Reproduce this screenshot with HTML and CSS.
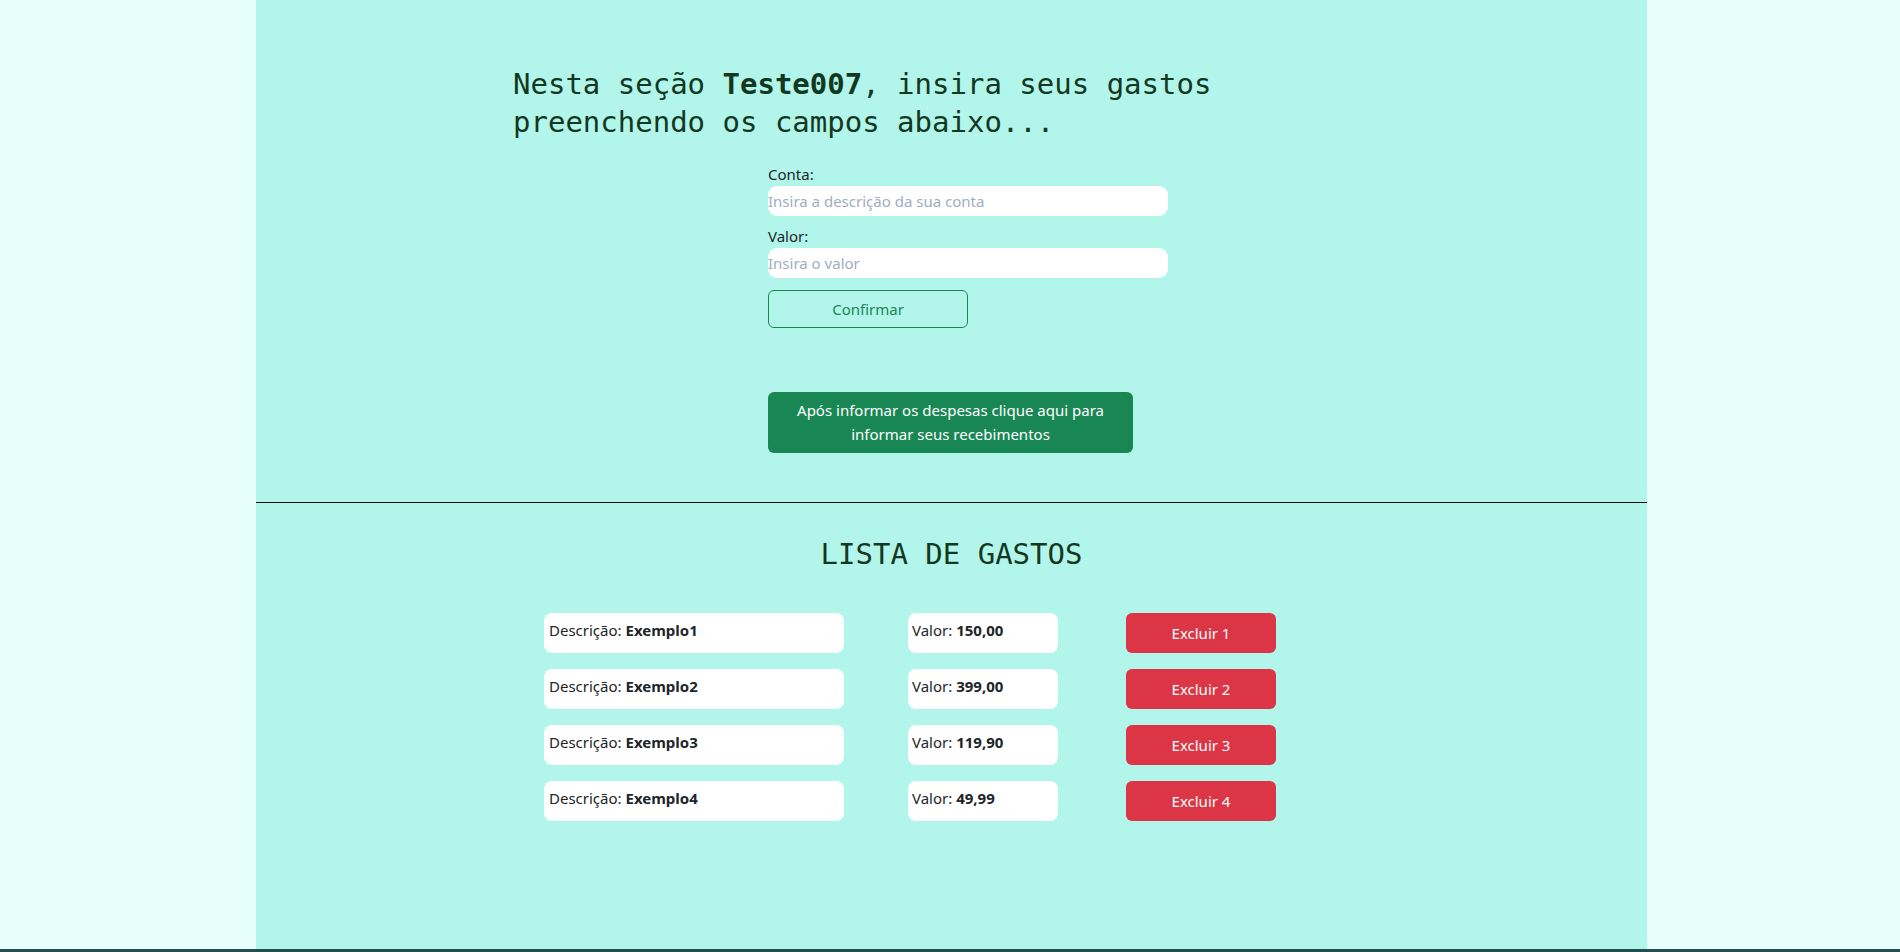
FILE: index.html
```html
<!DOCTYPE html>
<html lang="pt-BR">
<head>
<meta charset="utf-8">
<title>Gastos</title>
<link rel="stylesheet" href="styles.css">
</head>
<body>
<main class="page">
  <section class="entry">
    <h1 class="intro">Nesta seção <strong>Teste007</strong>, insira seus gastos preenchendo os campos abaixo...</h1>
    <form class="form">
      <label class="label" for="conta">Conta:</label>
      <input class="field" id="conta" type="text" placeholder="Insira a descrição da sua conta">
      <label class="label label-next" for="valor">Valor:</label>
      <input class="field" id="valor" type="text" placeholder="Insira o valor">
      <button class="btn-confirm" type="button">Confirmar</button>
    </form>
    <button class="btn-next" type="button">Após informar os despesas clique aqui para informar seus recebimentos</button>
  </section>
  <hr class="divider">
  <section class="list">
    <h2 class="list-title">LISTA DE GASTOS</h2>
    <div class="rows">
      <div class="row">
        <div class="cell cell-desc">Descrição: <b>Exemplo1</b></div>
        <div class="cell cell-val">Valor: <b>150,00</b></div>
        <button class="btn-del" type="button">Excluir 1</button>
      </div>
      <div class="row">
        <div class="cell cell-desc">Descrição: <b>Exemplo2</b></div>
        <div class="cell cell-val">Valor: <b>399,00</b></div>
        <button class="btn-del" type="button">Excluir 2</button>
      </div>
      <div class="row">
        <div class="cell cell-desc">Descrição: <b>Exemplo3</b></div>
        <div class="cell cell-val">Valor: <b>119,90</b></div>
        <button class="btn-del" type="button">Excluir 3</button>
      </div>
      <div class="row">
        <div class="cell cell-desc">Descrição: <b>Exemplo4</b></div>
        <div class="cell cell-val">Valor: <b>49,99</b></div>
        <button class="btn-del" type="button">Excluir 4</button>
      </div>
    </div>
  </section>
</main>
<footer class="footer"></footer>
</body>
</html>
```

FILE: styles.css
```css
* { box-sizing: border-box; }
html, body { margin: 0; padding: 0; }
body {
  background: #e6fffa;
  font-family: "Noto Sans", "Open Sans", sans-serif;
  font-size: 15px;
  line-height: 24px;
  color: #212529;
  display: flex;
  flex-direction: column;
  min-height: 952px;
}
.page {
  width: 1391px;
  margin-left: 256px;
  min-height: 949px;
  background: #b2f5ea;
  display: flex;
  flex-direction: column;
}
.entry {
  padding-top: 65px;
  display: flex;
  flex-direction: column;
}
.intro {
  margin: 0 0 0 257px;
  width: 800px;
  font-family: "DejaVu Sans Mono", "Liberation Mono", monospace;
  font-size: 29px;
  line-height: 38px;
  font-weight: normal;
  color: #12381f;
}
.intro strong { font-weight: bold; }
.form {
  margin: 21px 0 0 512px;
  width: 400px;
  display: flex;
  flex-direction: column;
  align-items: flex-start;
}
.label { display: block; line-height: 24px; }
.label-next { margin-top: 8px; }
.field {
  width: 400px;
  height: 30px;
  border: none;
  border-radius: 9px;
  padding: 0;
  background: #fff;
  font-family: inherit;
  font-size: 15px;
  color: #212529;
  outline: none;
}
.field::placeholder { color: #a0aec0; }
.btn-confirm {
  margin-top: 12px;
  width: 200px;
  height: 38px;
  border: 1px solid #198754;
  border-radius: 6px;
  background: transparent;
  color: #198754;
  font-family: inherit;
  font-size: 15px;
}
.btn-next {
  margin: 64px 0 0 512px;
  width: 365px;
  padding: 6px 12px 7px;
  border: none;
  border-radius: 6px;
  background: #198754;
  color: #fff;
  font-family: inherit;
  font-size: 15px;
  line-height: 24px;
  text-align: center;
}
.divider {
  margin: 49px 0 0;
  border: none;
  border-top: 1px solid #111;
  height: 0;
}
.list-title {
  margin: 32px 0 0;
  font-family: "DejaVu Sans Mono", "Liberation Mono", monospace;
  font-size: 29px;
  line-height: 38px;
  font-weight: normal;
  text-align: center;
  color: #12381f;
}
.rows {
  margin: 40px 0 0 288px;
  display: flex;
  flex-direction: column;
  gap: 16px;
}
.row {
  display: flex;
  align-items: flex-start;
}
.cell {
  height: 40px;
  background: #fff;
  border-radius: 8px;
  padding: 5px 4px;
}
.cell b { font-weight: bold; }
.cell-desc { width: 300px; padding-left: 5px; }
.cell-val { width: 150px; margin-left: 64px; }
.btn-del {
  margin-left: 68px;
  width: 150px;
  height: 40px;
  border: none;
  border-radius: 6px;
  background: #dc3545;
  color: #fff;
  font-family: inherit;
  font-size: 15px;
}
.footer {
  height: 3px;
  background: #234e52;
}
```
